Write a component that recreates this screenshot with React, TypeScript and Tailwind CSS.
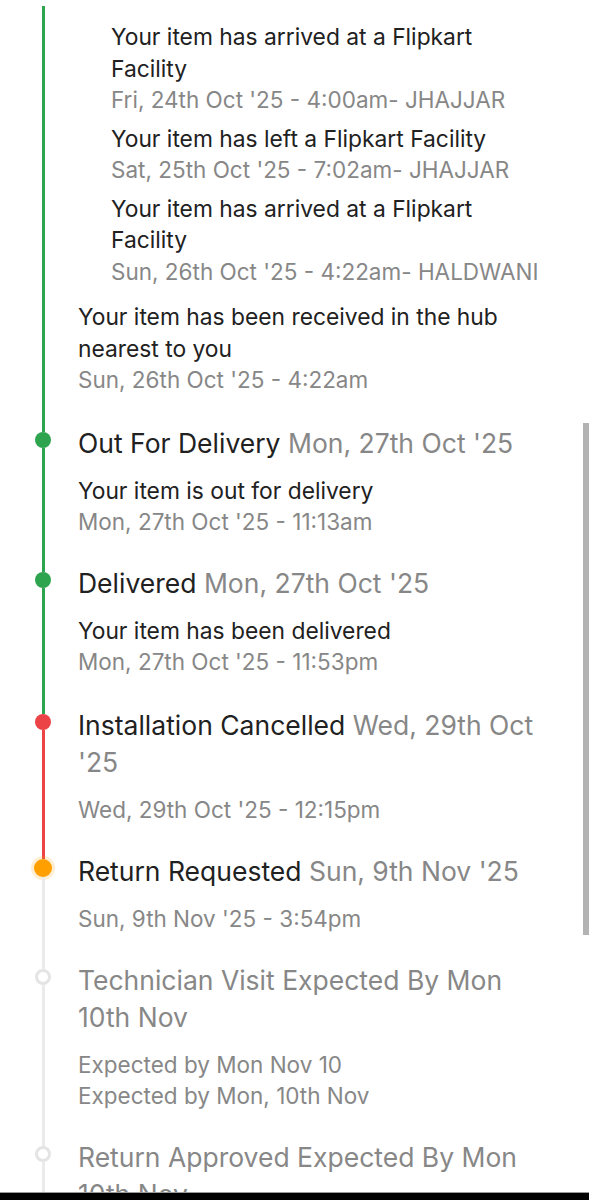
import React from "react";

const GREEN = "bg-[#2ea44f]";

type Step = {
  title: string;
  date?: string;
  dot: "green" | "red" | "orange" | "empty";
  seg: string;
  topSeg: string;
  lines: { text: string; sub?: boolean }[];
  future?: boolean;
  pb: string;
};

function Dot({ kind }: { kind: Step["dot"] }) {
  if (kind === "green") return <div className="w-4 h-4 rounded-full bg-[#2ea44f] shrink-0" />;
  if (kind === "red") return <div className="w-4 h-4 rounded-full bg-[#ec4446] shrink-0" />;
  if (kind === "orange")
    return <div className="w-[18px] h-[18px] rounded-full bg-[#ff9f00] shrink-0 shadow-[0_0_0_3px_rgba(255,159,0,0.18)]" />;
  return <div className="w-4 h-4 rounded-full border-[3px] border-[#e4e4e4] bg-white shrink-0" />;
}

const steps: Step[] = [
  {
    title: "Out For Delivery",
    date: "Mon, 27th Oct '25",
    dot: "green",
    topSeg: GREEN,
    seg: GREEN,
    pb: "pb-[27px]",
    lines: [
      { text: "Your item is out for delivery" },
      { text: "Mon, 27th Oct '25 - 11:13am", sub: true },
    ],
  },
  {
    title: "Delivered",
    date: "Mon, 27th Oct '25",
    dot: "green",
    topSeg: GREEN,
    seg: GREEN,
    pb: "pb-[29px]",
    lines: [
      { text: "Your item has been delivered" },
      { text: "Mon, 27th Oct '25 - 11:53pm", sub: true },
    ],
  },
  {
    title: "Installation Cancelled",
    date: "Wed, 29th Oct '25",
    dot: "red",
    topSeg: GREEN,
    seg: "bg-[#ec4446]",
    pb: "pb-[28px]",
    lines: [{ text: "Wed, 29th Oct '25 - 12:15pm", sub: true }],
  },
  {
    title: "Return Requested",
    date: "Sun, 9th Nov '25",
    dot: "orange",
    topSeg: "bg-[#ec4446]",
    seg: "bg-[#ebebeb]",
    pb: "pb-[27px]",
    lines: [{ text: "Sun, 9th Nov '25 - 3:54pm", sub: true }],
  },
  {
    title: "Technician Visit Expected By Mon 10th Nov",
    dot: "empty",
    topSeg: "bg-[#ebebeb]",
    seg: "bg-[#ebebeb]",
    future: true,
    pb: "pb-[27px]",
    lines: [
      { text: "Expected by Mon Nov 10", sub: true },
      { text: "Expected by Mon, 10th Nov", sub: true },
    ],
  },
  {
    title: "Return Approved Expected By Mon 10th Nov",
    dot: "empty",
    topSeg: "bg-[#ebebeb]",
    seg: "bg-[#ebebeb]",
    future: true,
    pb: "pb-[27px]",
    lines: [{ text: "Expected by Mon, 10th Nov", sub: true }],
  },
];

const subItems = [
  { a: "Your item has arrived at a Flipkart Facility", b: "Fri, 24th Oct '25 - 4:00am- JHAJJAR" },
  { a: "Your item has left a Flipkart Facility", b: "Sat, 25th Oct '25 - 7:02am- JHAJJAR" },
  { a: "Your item has arrived at a Flipkart Facility", b: "Sun, 26th Oct '25 - 4:22am- HALDWANI" },
];

export default function App() {
  return (
    <div
      className="min-h-[1200px] bg-white text-[#212121] pr-[44px]"
      style={{ fontFamily: "Inter, 'Noto Sans', sans-serif" }}
    >
      <div className="flex">
        <div className="w-[78px] shrink-0 flex">
          <div className="ml-[35px] w-4 flex flex-col items-center pt-[6px]">
            <div className={`w-[3px] flex-1 ${GREEN}`} />
          </div>
        </div>
        <div className="flex-1 pt-[21px] pb-[29px]">
          <div className="pl-[33px] flex flex-col gap-[7px]">
            {subItems.map((s, i) => (
              <div key={i} className="leading-[31.5px]">
                <div className="text-[22.8px]">{s.a}</div>
                <div className="text-[22.5px] text-[#878787]">{s.b}</div>
              </div>
            ))}
          </div>
          <div className="mt-[14px] leading-[31.5px]">
            <div className="text-[22.8px]">Your item has been received in the hub nearest to you</div>
            <div className="text-[22.5px] text-[#878787]">Sun, 26th Oct '25 - 4:22am</div>
          </div>
        </div>
      </div>

      {steps.map((s, i) => (
        <div key={i} className="flex">
          <div className="w-[78px] shrink-0 flex">
            <div className="ml-[35px] w-4 flex flex-col items-center">
              <div className={`w-[3px] ${s.dot === "orange" ? "h-[6px]" : "h-[7px]"} ${s.topSeg}`} />
              <Dot kind={s.dot} />
              <div className={`w-[3px] flex-1 ${s.seg}`} />
            </div>
          </div>
          <div className={`flex-1 ${s.pb}`}>
            <div className={`text-[26.5px] leading-[37px] ${s.future ? "text-[#878787]" : ""}`}>
              {s.title}
              {s.date && <span className="text-[#878787]"> {s.date}</span>}
            </div>
            <div className="mt-[13px] leading-[31.5px]">
              {s.lines.map((l, j) => (
                <div key={j} className={l.sub ? "text-[22.5px] text-[#878787]" : "text-[22.8px]"}>
                  {l.text}
                </div>
              ))}
            </div>
          </div>
        </div>
      ))}

      <div className="fixed right-0 top-[423px] w-[6px] h-[512px] bg-[#b3b3b3]" />
      <div className="fixed left-0 right-0 bottom-0 h-[8px] bg-black border-t border-[#9a9a9a]" />
    </div>
  );
}
